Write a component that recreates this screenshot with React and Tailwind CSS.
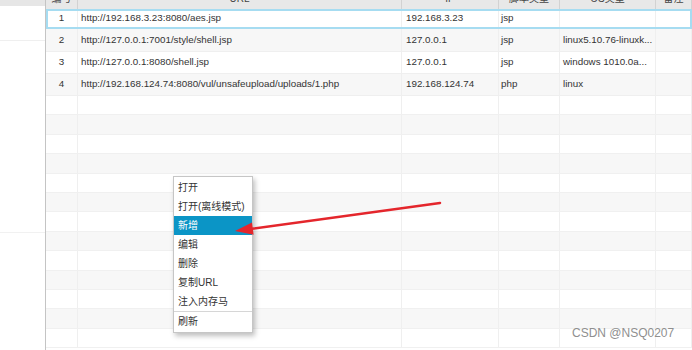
import React from "react";

const rows = [
  { h: "h-[20px]", bg: "bg-white", sel: true, c: ["1", "http://192.168.3.23:8080/aes.jsp", "192.168.3.23", "jsp", "", ""] },
  { h: "h-[23px]", bg: "bg-[#f7f7f7]", c: ["2", "http://127.0.0.1:7001/style/shell.jsp", "127.0.0.1", "jsp", "linux5.10.76-linuxk...", ""] },
  { h: "h-[22px]", bg: "bg-white", c: ["3", "http://127.0.0.1:8080/shell.jsp", "127.0.0.1", "jsp", "windows 1010.0a...", ""] },
  { h: "h-[22px]", bg: "bg-[#f7f7f7]", c: ["4", "http://192.168.124.74:8080/vul/unsafeupload/uploads/1.php", "192.168.124.74", "php", "linux", ""] },
];

const empties = Array.from({ length: 13 }, (_, i) => i);

const cellPad = ["justify-center", "pl-[3px]", "pl-[4px]", "pl-[2px]", "pl-[3px]", "pl-[3px]"];
const heads = ["编号", "URL", "IP", "脚本类型", "OS类型", "备注"];

const menu = [
  { t: "打开" },
  { t: "打开(离线模式)" },
  { t: "新增", active: true },
  { t: "编辑" },
  { t: "删除" },
  { t: "复制URL" },
  { t: "注入内存马" },
  { sep: true },
  { t: "刷新" },
];

export default function App() {
  return (
    <div className="relative w-[692px] h-[350px] overflow-hidden bg-white flex font-['Liberation_Sans','Noto_Sans_CJK_SC',sans-serif] text-[9.8px] text-[#333]">
      {/* left panel */}
      <div className="w-[45px] flex flex-col shrink-0">
        <div className="h-[6px] bg-[#e6e6e6]" />
        <div className="h-[35px] border-b border-[#efefef]" />
        <div className="h-[192px] border-b border-[#f1f1f1]" />
      </div>
      <div className="w-[1px] bg-[#c4c4c4] shrink-0" />
      {/* table */}
      <div className="flex-1 flex flex-col">
        <div className="grid grid-cols-[32px_324px_97px_61px_96px_1fr] h-[9px] bg-[#e8e8e8] overflow-hidden">
          {heads.map((h, i) => (
            <div key={i} className="border-r border-[#d2d2d2] overflow-hidden">
              <div className="leading-[10px] -mt-[6px] text-center text-[10px] text-[#444]">{h}</div>
            </div>
          ))}
        </div>
        {rows.map((r, ri) => (
          <div
            key={ri}
            className={`grid grid-cols-[32px_324px_97px_61px_96px_1fr] ${r.h} ${r.bg} border-b border-[#efefef] ${r.sel ? "outline-2 outline-[#a6dcf1] -outline-offset-2" : ""}`}
          >
            {r.c.map((c, ci) => (
              <div key={ci} className={`flex items-center border-r border-[#efefef] whitespace-nowrap overflow-hidden ${cellPad[ci]}`}>
                {c}
              </div>
            ))}
          </div>
        ))}
        {empties.map((i) => (
          <div
            key={i}
            className={`grid grid-cols-[32px_324px_97px_61px_96px_1fr] h-[19.4px] shrink-0 border-b border-[#f0f0f0] ${i % 2 === 0 ? "bg-white" : "bg-[#f7f7f7]"}`}
          >
            {heads.map((_, ci) => (
              <div key={ci} className="border-r border-[#efefef]" />
            ))}
          </div>
        ))}
      </div>

      {/* context menu */}
      <div className="absolute left-[173px] top-[176px] w-[80px] bg-white border border-[#c6c6c6] shadow-[2px_3px_5px_rgba(0,0,0,0.25)] py-[1px] text-[10px]">
        {menu.map((m, i) =>
          m.sep ? (
            <div key={i} className="h-[1px] bg-[#d6d6d6]" />
          ) : (
            <div
              key={i}
              className={`h-[19px] flex items-center pl-[4px] whitespace-nowrap ${m.active ? "bg-[#0b95c6] text-white" : "text-[#333]"}`}
            >
              {m.t}
            </div>
          )
        )}
      </div>

      {/* arrow */}
      <svg className="absolute left-0 top-0 pointer-events-none" width="692" height="350" viewBox="0 0 692 350">
        <line x1="440" y1="203" x2="250" y2="229" stroke="#e4262c" strokeWidth="2.5" strokeLinecap="round" />
        <polygon points="235,231 253.6,234.8 252,222.6" fill="#e4262c" />
      </svg>

      {/* watermark */}
      <div className="absolute left-[572px] top-[325px] text-[12px] leading-[16px] text-[#8f8f8f] font-['Liberation_Sans',sans-serif] whitespace-nowrap">
        CSDN @NSQ0207
      </div>
    </div>
  );
}
